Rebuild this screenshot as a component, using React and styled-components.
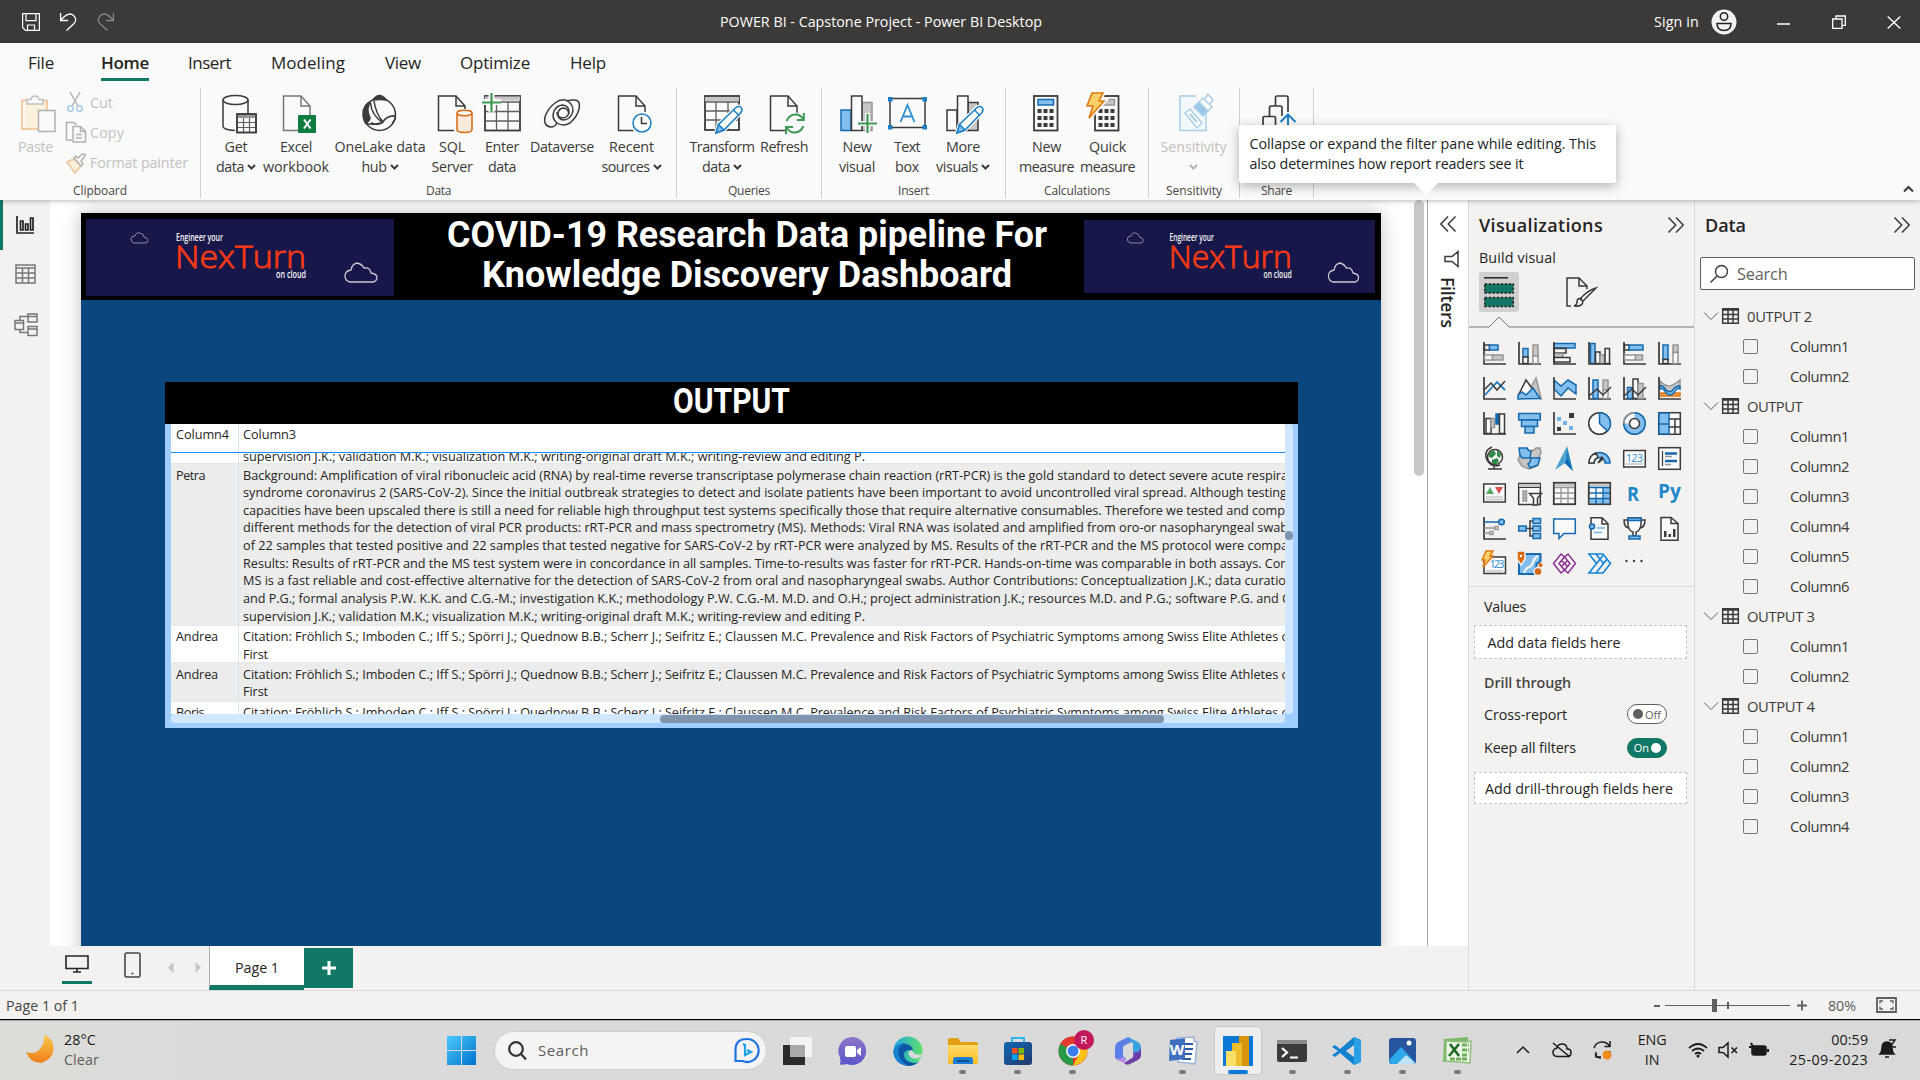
import React, { useLayoutEffect, useRef, useState } from 'react';
import styled, { createGlobalStyle, css } from 'styled-components';

const UI = "'Open Sans', 'Noto Sans', sans-serif";
const INK = '#3b3a39';
const BLUE = '#83beec';
const EDGE = '#1469ae';
const GREY = '#c8c6c4';
const MID = '#979593';
const PAPER = '#fafafa';
const GREEN = '#117865';

const Global = createGlobalStyle`
  * { box-sizing: border-box; }
  html, body { margin: 0; padding: 0; overflow: hidden; }
  body { font-family: ${UI}; color: #252423; }
  svg { display: block; overflow: visible; flex: none; }
`;

/* ---------- fitted text ---------- */
const Run = styled.span`
  display: inline-block;
  white-space: pre;
  flex: none;
`;
const Stretch = styled.span`
  display: inline-block;
  white-space: pre;
  transform-origin: 0 50%;
`;
const StretchBox = styled.span`
  display: inline-block;
  white-space: nowrap;
  width: ${(p) => p.$w}px;
`;

function Fit({ w, children }) {
  const ref = useRef(null);
  const [gap, setGap] = useState(0);
  useLayoutEffect(() => {
    const natural = ref.current.getBoundingClientRect().width;
    setGap((w - natural) / String(children).length);
  }, []);
  return <Run ref={ref} style={{ letterSpacing: gap + 'px' }}>{children}</Run>;
}

function FitScale({ w, children }) {
  const ref = useRef(null);
  const [k, setK] = useState(1);
  useLayoutEffect(() => {
    setK(w / ref.current.getBoundingClientRect().width);
  }, []);
  return (
    <StretchBox $w={w}>
      <Stretch ref={ref} style={{ transform: `scaleX(${k})` }}>{children}</Stretch>
    </StretchBox>
  );
}

/* ---------- frame ---------- */
const Frame = styled.div`
  width: 1920px;
  height: 1080px;
  display: flex;
  flex-direction: column;
  background: #f3f2f1;
  overflow: hidden;
`;
const TitleBar = styled.header`
  height: 43px;
  flex: none;
  background: #3b3a38;
  color: #fff;
  display: grid;
  grid-template-columns: 720px 325px 1fr;
  align-items: center;
  font-size: 14.3px;
`;
const QuickTools = styled.div`
  display: flex;
  align-items: center;
  gap: 20px;
  padding-left: 22px;
`;
const WindowTools = styled.div`
  display: flex;
  align-items: center;
  padding-left: 609px;
`;
const Tool = styled.span`
  display: flex;
  margin-left: ${(p) => p.$gap}px;
`;

const RibbonArea = styled.section`
  height: 157px;
  flex: none;
  background: #fafafa;
  position: relative;
  z-index: 2;
  box-shadow: 0 1px 5px rgba(0, 0, 0, 0.28);
`;
const Tabs = styled.nav`
  display: flex;
  height: 45px;
  padding-left: 28px;
`;
const Tab = styled.div`
  width: ${(p) => p.$w}px;
  margin-right: ${(p) => p.$gap}px;
  height: 38px;
  line-height: 40px;
  font-size: 17px;
  color: #252423;
  ${(p) => p.$active && css`
    font-weight: 600;
    border-bottom: 3px solid ${GREEN};
  `}
`;
const Groups = styled.div`
  display: flex;
  height: 112px;
`;
const Group = styled.div`
  width: ${(p) => p.$w}px;
  height: 110px;
  border-right: 1px solid #d2d0ce;
  display: flex;
  flex-direction: column;
`;
const GroupBody = styled.div`
  display: flex;
  flex: none;
  height: 93px;
  padding: 6px 0 0 ${(p) => p.$pad || 0}px;
`;
const GroupLabel = styled.div`
  display: flex;
  justify-content: center;
  flex: none;
  font-size: 12px;
  line-height: 20px;
  color: #484644;
`;
const RibbonButton = styled.div`
  width: ${(p) => p.$w}px;
  display: flex;
  flex-direction: column;
  align-items: center;
  color: ${(p) => (p.$off ? '#c3c1bf' : '#3b3a39')};
  font-size: 14.3px;
  line-height: 20px;
`;
const ButtonLine = styled.div`
  display: flex;
  align-items: center;
  justify-content: center;
  gap: 3px;
  height: 20px;
  white-space: nowrap;
  &:first-of-type { margin-top: 3px; }
`;
const SmallButtons = styled.div`
  display: flex;
  flex-direction: column;
  padding-left: 7px;
`;
const SmallButton = styled.div`
  display: flex;
  align-items: center;
  gap: 4px;
  height: 30.3px;
  margin-top: ${(p) => (p.$first ? -7 : 0)}px;
  font-size: 14.3px;
  color: #c3c1bf;
`;
const CollapseMark = styled.div`
  position: absolute;
  right: 6px;
  bottom: 7px;
`;
const Tip = styled.div`
  position: absolute;
  left: 1239px;
  top: 82px;
  width: 377px;
  height: 58px;
  padding: 9px 0 0 10.5px;
  background: #fff;
  border-radius: 2px;
  box-shadow: 0 3px 12px rgba(0, 0, 0, 0.3);
  color: #201f1e;
  font-size: 14.3px;
  line-height: 20px;
  display: flex;
  flex-direction: column;
  align-items: flex-start;
  &::after {
    content: '';
    position: absolute;
    left: 175px;
    top: 58px;
    border: 12.5px solid transparent;
    border-top-color: #fff;
    border-bottom-width: 0;
  }
`;

const Main = styled.main`
  height: 790px;
  flex: none;
  display: flex;
`;
const Left = styled.div`
  width: 1468px;
  display: flex;
  flex-direction: column;
`;
const Work = styled.div`
  height: 746px;
  display: flex;
`;
const Rail = styled.aside`
  width: 50px;
  display: flex;
  flex-direction: column;
  background: #f3f2f1;
`;
const RailItem = styled.div`
  height: ${(p) => p.$h}px;
  display: flex;
  align-items: center;
  padding-left: ${(p) => p.$pad}px;
  border-left: 3px solid ${(p) => (p.$active ? GREEN : 'transparent')};
`;
const Canvas = styled.div`
  width: 1377px;
  overflow: hidden;
  background: #fff;
  display: flex;
  justify-content: space-between;
  padding-left: 31px;
`;
const CanvasThumb = styled.div`
  width: 10px;
  height: 276px;
  margin-right: 3px;
  border-radius: 5px;
  background: #c8c8c8;
`;
const Page = styled.div`
  width: 1300px;
  height: 760px;
  margin-top: 13px;
  background: #0a477f;
  box-shadow: 0 0 18px rgba(0, 0, 0, 0.25);
`;
const Banner = styled.div`
  height: 87px;
  background: #000;
  display: flex;
  align-items: flex-start;
`;
const Logo = styled.div`
  width: ${(p) => p.$w}px;
  height: ${(p) => p.$h}px;
  margin: ${(p) => p.$top}px 0 0 ${(p) => p.$left}px;
  background: #171849;
  overflow: hidden;
`;
const BannerTitle = styled.h1`
  width: 690px;
  margin: 2px 0 0;
  color: #fff;
  font: 700 36px/40px Roboto, sans-serif;
  display: flex;
  flex-direction: column;
  align-items: center;
  padding-left: 15px;
`;
const Visual = styled.div`
  width: 1133px;
  height: 346px;
  margin: 82px 0 0 84px;
  background: #a0cfff;
`;
const VisualTitle = styled.div`
  height: 42px;
  background: #000;
  color: #fff;
  font: 700 34.5px/39px Roboto, sans-serif;
  display: flex;
  padding-left: 507.5px;
`;
const VisualRow = styled.div`
  display: flex;
  padding-left: 6px;
`;
const Grid = styled.div`
  width: 1114px;
  height: 290px;
  background: #fff;
  display: flex;
  flex-direction: column;
  overflow: hidden;
  font-size: 12.7px;
  color: #252423;
`;
const GridHead = styled.div`
  height: 29px;
  flex: none;
  display: flex;
  border-bottom: 1px solid #1a8fff;
`;
const GridBody = styled.div`
  height: 261px;
  flex: none;
  overflow: hidden;
  display: flex;
  flex-direction: column;
`;
const GridRow = styled.div`
  display: flex;
  flex: none;
  height: ${(p) => p.$h}px;
  background: ${(p) => (p.$alt ? '#ececec' : '#fff')};
  border-bottom: 1px solid #e3e8ee;
`;
const NameCell = styled.div`
  width: 68px;
  flex: none;
  padding: ${(p) => p.$top || 0}px 0 0 5px;
  border-right: 1px solid #d9e6f2;
  line-height: 17.65px;
`;
const TextCell = styled.div`
  flex: none;
  padding: ${(p) => p.$top || 0}px 0 0 4px;
  margin-bottom: ${(p) => (p.$end ? -3 : 0)}px;
  display: flex;
  flex-direction: column;
  align-items: flex-start;
  justify-content: ${(p) => (p.$end ? 'flex-end' : 'flex-start')};
  line-height: 17.65px;
`;
const VTrack = styled.div`
  width: 8px;
  height: 290px;
  padding-top: 107px;
  border-radius: 4px;
  background: #d1e7ff;
`;
const VThumb = styled.div`
  height: 9px;
  border-radius: 4px;
  background: #8095ad;
`;
const HTrack = styled.div`
  width: 1114px;
  height: 9px;
  padding: 1px 0 0 489px;
  border-radius: 4px;
  background: #d1e7ff;
`;
const HThumb = styled.div`
  width: 504px;
  height: 7.5px;
  border-radius: 4px;
  background: #8095ad;
`;
const Filters = styled.aside`
  width: 41px;
  border-left: 1px solid #a8a6a4;
  background: #fff;
  display: flex;
  flex-direction: column;
  align-items: center;
  padding-top: 16px;
`;
const FunnelSlot = styled.div`
  padding: 18px 0 0 6px;
`;
const FilterLabel = styled.div`
  writing-mode: vertical-rl;
  margin-top: 9px;
  font-size: 17.5px;
  font-weight: 600;
  letter-spacing: -0.2px;
  line-height: 22px;
`;
const PageTabs = styled.div`
  height: 44px;
  display: flex;
  align-items: flex-start;
  padding-left: 62px;
`;
const ViewIcon = styled.div`
  width: 30px;
  height: 38px;
  padding-top: ${(p) => p.$top}px;
  display: flex;
  justify-content: center;
  border-bottom: 3px solid ${(p) => (p.$active ? GREEN : 'transparent')};
`;
const PhoneIcon = styled.div`
  margin-left: 32px;
  padding-top: 6px;
`;
const Steppers = styled.div`
  display: flex;
  gap: 21px;
  margin: 16px 8px 0 27px;
`;
const PageTab = styled.div`
  width: 95px;
  height: 44px;
  padding-left: 25px;
  background: #fff;
  border-left: 1px solid #b3b0ad;
  border-bottom: 5px solid ${GREEN};
  line-height: 43px;
  font-size: 14.3px;
`;
const AddPage = styled.div`
  width: 49px;
  height: 40px;
  margin-top: 2px;
  display: flex;
  align-items: center;
  justify-content: center;
  background: ${GREEN};
`;

/* ---------- side panes ---------- */
const Pane = styled.aside`
  width: ${(p) => p.$w}px;
  border-left: 1px solid #dcdad8;
  background: #f3f2f1;
`;
const PaneHead = styled.div`
  height: 50px;
  display: flex;
  align-items: center;
  justify-content: space-between;
  padding: 0 10px;
  font-size: 18px;
  font-weight: 600;
`;
const BuildLabel = styled.div`
  padding-left: 10px;
  line-height: 16px;
  font-size: 14.3px;
  font-weight: 500;
`;
const Modes = styled.div`
  display: flex;
  height: 46px;
  padding: 6px 0 0 10px;
  gap: 42px;
`;
const Mode = styled.div`
  width: 40px;
  height: 40px;
  display: flex;
  align-items: center;
  justify-content: center;
  border-radius: 3px;
  background: ${(p) => (p.$on ? '#d2d0ce' : 'transparent')};
`;
const VizGrid = styled.div`
  display: grid;
  grid-template-columns: repeat(6, 35px);
  grid-auto-rows: 35px;
  height: 260px;
  padding: 15px 0 0 14px;
  border-bottom: 1px solid #dcdad8;
`;
const FieldLabel = styled.div`
  display: flex;
  align-items: center;
  justify-content: space-between;
  height: ${(p) => p.$h}px;
  padding: 0 27px 0 15px;
  font-size: 14.3px;
  font-weight: ${(p) => (p.$strong ? 600 : 400)};
  color: ${(p) => (p.$strong ? '#484644' : '#252423')};
`;
const DropWell = styled.div`
  width: 213px;
  height: ${(p) => p.$h}px;
  margin-left: 5px;
  padding-left: ${(p) => p.$pad}px;
  display: flex;
  align-items: center;
  border: 1px dashed #c8c6c4;
  background: #fff;
  font-size: 14.3px;
`;
const Toggle = styled.div`
  width: 40px;
  height: 20px;
  display: flex;
  align-items: center;
  gap: 2px;
  padding: 0 5px;
  border-radius: 10px;
  border: 1px solid ${(p) => (p.$on ? GREEN : '#605e5c')};
  background: ${(p) => (p.$on ? GREEN : '#fff')};
  color: ${(p) => (p.$on ? '#fff' : '#605e5c')};
  flex-direction: ${(p) => (p.$on ? 'row-reverse' : 'row')};
  font-size: 11px;
  &::before {
    content: '';
    width: 10px;
    height: 10px;
    border-radius: 50%;
    background: ${(p) => (p.$on ? '#fff' : '#605e5c')};
  }
`;
const SearchBox = styled.div`
  width: 215px;
  height: 33px;
  margin: 7px 0 11px 5px;
  padding-left: 9px;
  display: flex;
  align-items: center;
  gap: 9px;
  border: 1px solid #605e5c;
  border-radius: 2px;
  background: #fff;
  color: #605e5c;
  font-size: 16.3px;
`;
const TableRow = styled.div`
  height: 30px;
  display: flex;
  align-items: center;
  gap: 4px;
  padding-left: 9px;
  font-size: 14.8px;
  color: #3b3a39;
`;
const TableName = styled.span`
  padding-left: 4px;
`;
const FieldRow = styled.div`
  height: 30px;
  display: flex;
  align-items: center;
  gap: 32px;
  padding-left: 48px;
  font-size: 14.8px;
  color: #3b3a39;
`;
const Check = styled.span`
  width: 15px;
  height: 15px;
  border: 1px solid #797775;
  border-radius: 2px;
`;

/* ---------- status + taskbar ---------- */
const Status = styled.footer`
  height: 30px;
  flex: none;
  display: flex;
  align-items: center;
  padding-left: 6px;
  border-top: 1px solid #dcdad8;
  border-bottom: 1px solid #000;
  font-size: 14.3px;
  color: #484644;
`;
const Zoom = styled.div`
  margin-left: 1575px;
  display: flex;
  align-items: center;
  color: #605e5c;
`;
const Percent = styled.span`
  margin: 0 20px 0 21px;
`;
const Taskbar = styled.footer`
  height: 60px;
  flex: none;
  display: flex;
  align-items: center;
  background: linear-gradient(90deg, #dcdcd8, #dadada 12%, #d9d9d9);
  border-top: 1px solid #a9a9a9;
`;
const Weather = styled.div`
  width: 447px;
  padding: 0 0 2px 26px;
  display: flex;
  align-items: center;
  gap: 9px;
  font-size: 14.3px;
`;
const Stack = styled.div`
  display: flex;
  flex-direction: column;
  align-items: ${(p) => p.$align || 'flex-start'};
  line-height: 20px;
  color: #1b1b1b;
`;
const Faint = styled.span`
  color: #5d5d5d;
`;
const SearchPill = styled.div`
  width: 273px;
  height: 39px;
  margin: 0 0 1px 18px;
  padding: 0 7px 0 13px;
  display: flex;
  align-items: center;
  gap: 12px;
  border-radius: 20px;
  border: 1px solid #cfcfcf;
  background: #f4f4f4;
  color: #5d5d5d;
  font-size: 15px;
`;
const BingSlot = styled.span`
  margin-left: auto;
`;
const Apps = styled.div`
  display: flex;
  padding: 0 0 1px 7px;
`;
const AppSlot = styled.div`
  width: 48px;
  height: 49px;
  margin-right: 6.95px;
  padding-top: 9px;
  display: flex;
  flex-direction: column;
  align-items: center;
  border-radius: 5px;
  background: ${(p) => (p.$active ? '#eeeeee' : 'transparent')};
  border: 1px solid ${(p) => (p.$active ? '#c9c9c9' : 'transparent')};
  &::after {
    content: '';
    display: ${(p) => (p.$open ? 'block' : 'none')};
    width: ${(p) => (p.$active ? 20 : 7)}px;
    height: 4px;
    margin-top: 4px;
    border-radius: 2px;
    background: ${(p) => (p.$active ? '#0a78d4' : '#7b7b7b')};
  }
`;
const Tray = styled.div`
  display: flex;
  align-items: center;
  margin-left: 23px;
  padding-bottom: 2px;
  font-size: 14.3px;
`;
const TrayItem = styled.div`
  width: ${(p) => p.$w}px;
  display: flex;
  justify-content: ${(p) => p.$justify || 'center'};
`;

/* ---------- icon helpers ---------- */
const Svg = ({ s = 40, w = s, h = s, children, ...rest }) => (
  <svg width={w} height={h} viewBox={`0 0 ${w} ${h}`} fill="none" stroke={INK} strokeWidth="1.5" {...rest}>{children}</svg>
);
const B = ({ x, y, w, h, f = PAPER, s = INK }) => <rect x={x} y={y} width={w} height={h} fill={f} stroke={s} />;
const Axis = () => <path d="M1 0V22H23" strokeWidth="1.7" />;
const Doc = ({ x = 6.5, stroke = INK }) => (
  <path d={`M${x} 2h17.5l9 10v24.5h-26.500z M${x + 17.5} 2v10h9`} fill={PAPER} stroke={stroke} />
);
const Caret = ({ color = INK }) => (
  <Svg w={9} h={6} stroke={color} strokeWidth="2"><path d="M1 1l3.500 3.500L8 1" /></Svg>
);
const Pencil = () => (
  <g>
    <path d="M14 39l2.500-8.500L34 13.500q3-2 5 0t0 5L22 36z" fill={PAPER} stroke={PAPER} strokeWidth="4" />
    <path d="M14 39l2.500-8.500L34 13.500q3-2 5 0t0 5L22 36z" fill="#fff" stroke="#1a7fc4" />
    <path d="M14 39l2.500-8.500 5.500 5.500z" fill={BLUE} stroke="#1a7fc4" />
    <path d="M31.500 16l5 5" stroke="#1a7fc4" />
  </g>
);
const Calculator = ({ panel = BLUE, edge = EDGE }) => (
  <g>
    <rect x="7" y="2" width="23.500" height="34.500" fill={PAPER} strokeWidth="1.800" />
    <rect x="11" y="5.500" width="15.500" height="5.500" fill={panel} stroke={edge} />
    {[15, 22, 29].map((y) => [10.5, 16.5, 22.5].map((x) => (
      <rect key={x + '-' + y} x={x} y={y} width="4" height="4" fill={INK} stroke="none" />
    )))}
  </g>
);

const icons = {
  paste: (
    <Svg stroke="#c3c1bf">
      <path d="M9 7h22v10h-8v18H9z" fill="#fbf1da" stroke="none" />
      <path d="M12 6.500H6V35h16M26 6.500h5V16" stroke="#f2c9a0" strokeWidth="2" />
      <path d="M11 10V5.500h4q.500-3.500 4-3.500t4 3.500h4V10z" fill={PAPER} />
      <path d="M22.500 16.500H39v21H22.500z" fill={PAPER} stroke="#b3b1af" />
    </Svg>
  ),
  getData: (
    <Svg>
      <path d="M7 6v26q0 4 12 4.500M32 6v13" /><ellipse cx="19.500" cy="6" rx="12.500" ry="4.500" fill={PAPER} />
      <rect x="21" y="20" width="19" height="18.500" fill={PAPER} /><path d="M21 22.500h19" strokeWidth="3" stroke={MID} />
      <path d="M21 28.500h19M21 33.500h19M27.500 24v14M33.500 24v14" stroke="#605e5c" strokeWidth="1.200" /><rect x="21" y="20" width="19" height="18.500" />
    </Svg>
  ),
  excel: (
    <Svg>
      <Doc x={7.5} stroke="#797775" /><rect x="22" y="21" width="18" height="18" rx="1" fill="#107c41" stroke="none" />
      <path d="M28 25.500l6.500 9M34.500 25.500l-6.500 9" stroke="#fff" strokeWidth="2" />
    </Svg>
  ),
  onelake: (
    <Svg>
      <circle cx="19.500" cy="20.500" r="16" />
      <path d="M12 6.500Q2 9 2.300 21q.500 6 3 9 5-2 5.500-6Q6 14 12 6.500z" fill={INK} stroke="none" />
      <path d="M13 6q6-9 13.500 0-6-1-13.500 0z" fill={INK} />
      <path d="M10.500 9q1 12 12 19.500M14 7q2 13 9 21 4-7 13-6M5.500 29.500q8 2 17-1M23 28.500q-6 4-12 0M35 22q1 4-3 7" />
    </Svg>
  ),
  sql: (
    <Svg>
      <Doc x={6.5} /><path d="M22 15h19v26H22z" fill={PAPER} stroke="none" />
      <path d="M25 19.500v16q0 3 7.500 3t7.500-3v-16" fill="#fbeadb" stroke="#d8680f" /><ellipse cx="32.500" cy="19" rx="7.500" ry="2.700" fill="#fff" stroke="#d8680f" />
    </Svg>
  ),
  enter: (
    <Svg>
      <rect x="3" y="2" width="35" height="34.500" fill={PAPER} strokeWidth="1.800" /><path d="M3 4.500h35" stroke={GREY} strokeWidth="4" />
      <path d="M3 8h35M3 17.500h35M3 27h35M14.500 8v28M26 8v28" stroke="#605e5c" strokeWidth="1.300" />
      <path d="M9.500-2v20M-1 8h20" stroke={PAPER} strokeWidth="6" /><path d="M9.500-1v19M0 8.500h19" stroke="#3f9a55" strokeWidth="2.200" />
    </Svg>
  ),
  dataverse: (
    <Svg>
      <path d="M31 6q8-1 6 9-2 8-9 14-7 4-13 0-6-5-3-12 3-6 9-6 6 1 6 7-1 6-7 6-5-1-5-6" />
      <path d="M9 33q-8-1-6-10 3-9 10-14 8-6 14-1 6 5 3 12-3 6-9 6-5-1-5-6 0-5 5-6 5 0 6 6" /><path d="M9 33q4 0 6-4M31 6q-3 0-6 1" />
    </Svg>
  ),
  recent: (
    <Svg>
      <Doc x={6.5} /><circle cx="30" cy="29" r="9.500" fill="#fff" stroke="#fafafa" strokeWidth="4" />
      <circle cx="30" cy="29" r="9" fill="#fff" stroke="#1a7fc4" /><path d="M29.500 23v6.500h5.500" />
    </Svg>
  ),
  transform: (
    <Svg>
      <rect x="3" y="2" width="34" height="34" fill={PAPER} strokeWidth="1.800" /><path d="M3 5h34" stroke={GREY} strokeWidth="4" />
      <path d="M3 8h34M3 17h34M3 26h34M14 8v28M26 8v28" stroke="#605e5c" strokeWidth="1.300" /><Pencil />
    </Svg>
  ),
  refresh: (
    <Svg>
      <Doc x={6.5} /><circle cx="31" cy="29.500" r="11" fill={PAPER} stroke="none" />
      <g stroke="#3f9a55" strokeWidth="2"><path d="M22.500 27q3-6.500 9-6.500 5 0 8 5M39.500 32q-3 6.500-9 6.500-5 0-8-5" /><path d="M39.800 19v7h-7M22 40v-7h7" /></g>
    </Svg>
  ),
  newVisual: (
    <Svg>
      <B x={4} y={16} w={10} h={20.5} f={BLUE} s={EDGE} /><B x={25} y={8.5} w={10} h={28} f={GREY} s={MID} /><B x={14.5} y={2} w={10.5} h={34.500} />
      <path d="M30.500 19v20M20.500 29.500h20" stroke={PAPER} strokeWidth="5" /><path d="M30.500 20v19M21 29.500h19" stroke="#3f9a55" strokeWidth="2.200" />
    </Svg>
  ),
  textBox: (
    <Svg>
      <rect x="3" y="4.500" width="35" height="29" fill={PAPER} />
      {[[1, 3], [35.5, 3], [1, 31], [35.5, 31]].map(([x, y]) => <rect key={x + '-' + y} x={x} y={y} width="4.500" height="4.500" fill="#1a7fc4" stroke="none" />)}
      <path d="M13.500 28L20.500 11 27.500 28M16 22.500h9" stroke="#2b8fd6" strokeWidth="1.800" />
    </Svg>
  ),
  more: (
    <Svg>
      <B x={4} y={16} w={10} h={20.5} /><B x={25} y={8.5} w={10} h={28} f={GREY} /><B x={14.5} y={2} w={10.5} h={34.500} /><Pencil />
    </Svg>
  ),
  calc: <Svg><Calculator /></Svg>,
  quick: (
    <Svg>
      <Calculator panel={GREY} edge={MID} />
      <path d="M4-1h11l-4 8h5L1 24l4-12H-1z" fill="#ffd36b" stroke={PAPER} strokeWidth="5" /><path d="M4-1h11l-4 8h5L1 24l4-12H-1z" fill="#ffd06a" stroke="#e07a12" strokeWidth="1.600" />
    </Svg>
  ),
  sensitivity: (
    <Svg stroke="#a9cfe8">
      <path d="M22 2H6v34.500h26V20" fill="#f2f8fc" /><path d="M20 13l5-5 9 9-5 5z" fill="#9cc9e8" /><path d="M25 8l4-4 9 9-4 4z" fill={PAPER} /><path d="M31 5l3-5 5 6-3 4" />
      <path d="M11 19l5-4 12 14-5 5z" fill={PAPER} /><path d="M16 20l7 8" strokeWidth="2" />
    </Svg>
  ),
  share: (
    <Svg strokeWidth="1.700">
      <path d="M18.500 12V3.500q0-1.500 1.500-1.500h9.500q1.500 0 1.500 1.500V18M12.500 22v-8.500q0-1.500 1.500-1.500h9.500q1.500 0 1.500 1.500V22M6 34V24q0-1.500 1.500-1.500H17q1.500 0 1.500 1.500v10" />
      <path d="M31 34V21M23.500 28l7.500-7.500L38.500 28" stroke="#1a7fc4" strokeWidth="2" />
    </Svg>
  ),
};

const cut = (
  <Svg w={20} h={22} stroke="#b3b1af"><path d="M4 1l8 14M14 1L6 15" /><circle cx="4.500" cy="17.500" r="2.800" stroke="#a5cbe6" /><circle cx="13.500" cy="17.500" r="2.800" stroke="#a5cbe6" /></Svg>
);
const copy = (
  <Svg w={20} h={20} stroke="#b3b1af"><path d="M6 18H.500V.500H8l2.500 2.500" /><path d="M7 4.500h7.500l5 5v10.500H7z" fill={PAPER} /><path d="M14.500 4.500v5h5M10 12.500h6M10 16h6" /></Svg>
);
const painter = (
  <Svg w={20} h={20} stroke="#b3b1af"><path d="M1 9l7-3 7 7-6 7z" fill="#fbeedd" stroke="#efc49a" /><path d="M8 5l7 8 2-2-2-3 4-5q1-2-1-2t-3 1l-3 3-2-2z" fill={PAPER} /></Svg>
);

const V = ({ children }) => <Svg s={23}>{children}</Svg>;
const vizIcons = [
  <V><Axis /><B x={1.500} y={3} w={5} h={5} /><B x={6.500} y={3} w={8.500} h={5} f={BLUE} s={EDGE} /><B x={1.500} y={13} w={8} h={5} s={MID} /><B x={9.500} y={13} w={10.500} h={5} f={GREY} s={MID} /></V>,
  <V><Axis /><B x={5} y={6.500} w={5} h={8.500} f={BLUE} s={EDGE} /><B x={5} y={15} w={5} h={6.500} /><B x={15} y={3} w={5} h={12} f={GREY} s={MID} /><B x={15} y={14} w={5} h={7.500} s={MID} /></V>,
  <V><B x={1} y={1.500} w={21} h={4.500} f={BLUE} s={EDGE} /><B x={1} y={6.500} w={12} h={4.500} /><B x={1} y={11.500} w={9} h={4} f={GREY} s={MID} /><B x={1} y={15.500} w={16} h={4.500} /><Axis /></V>,
  <V><B x={2.500} y={1.500} w={4.500} h={20} f={BLUE} s={EDGE} /><B x={7.500} y={10} w={4.500} h={11.500} /><B x={12} y={13} w={4.500} h={8.500} f={GREY} s={MID} /><B x={17} y={6.500} w={4.500} h={15} /><Axis /></V>,
  <V><Axis /><B x={1.500} y={3} w={4.500} h={5} /><B x={6} y={3} w={14} h={5} f={BLUE} s={EDGE} /><B x={1.500} y={13} w={11} h={5} s={MID} /><B x={12.500} y={13} w={7} h={5} f={GREY} s={MID} /></V>,
  <V><Axis /><B x={5} y={3} w={5} h={14.500} f={BLUE} s={EDGE} /><B x={5} y={17.500} w={5} h={4} /><B x={15} y={3} w={5} h={7.500} f={GREY} s={MID} /><B x={15} y={10.500} w={5} h={11} s={MID} /></V>,
  <V><Axis /><path d="M2 18l12-13 8 8" stroke="#1a7fc4" strokeWidth="1.800" /><path d="M1 13l7-7 6 7 8-9" /></V>,
  <V><path d="M12 12l6-11 5 20V22z" fill={GREY} stroke={MID} /><path d="M0 19L8 3l8 11" fill={PAPER} /><path d="M0 22v-4l4-3 4 3 7-7 7 10.500z" fill={BLUE} stroke={EDGE} /></V>,
  <V><path d="M1 3l7 6 7-6 8 5v9l-8-6-7 8-7-7z" fill={BLUE} stroke={EDGE} /><path d="M1 0v22h22" /></V>,
  <V><Axis /><B x={5} y={3} w={5} h={18.500} f={BLUE} s={EDGE} /><B x={15} y={3} w={5} h={10} f={GREY} s={MID} /><B x={15} y={13} w={5} h={8.500} s={MID} /><path d="M1 19l8-7 6 6 8-8" /></V>,
  <V><Axis /><B x={4.500} y={10.500} w={5} h={11} f={BLUE} s={EDGE} /><B x={10} y={2} w={5} h={19.500} /><B x={15} y={6.500} w={5} h={15} f={GREY} s={MID} /><path d="M1 19l8-7 6 6 8-8" /></V>,
  <V><path d="M2 4q5 5 9 5t11-6v5q-6 6-11 6T2 8z" fill={GREY} stroke={MID} /><path d="M3 16h19v3H3z" fill="#f5a04c" stroke="#e07a12" /><path d="M2 12q3-2 6 4 4 4 8 0 3-6 6-4v-3q-5 0-8 5-3 2-6-1-3-5-6-4z" fill={BLUE} stroke={EDGE} /><Axis /></V>,
  <V><Axis /><B x={3} y={6.500} w={5} h={15} /><B x={8} y={6.500} w={3.500} h={9} f={GREY} s={MID} /><B x={13} y={2} w={2.500} h={10} f={EDGE} s={EDGE} /><B x={16.500} y={2} w={5} h={19.500} /></V>,
  <V><B x={.7} y={1.500} w={21.600} h={6.500} f={BLUE} s={EDGE} /><B x={3.500} y={8} w={16} h={6.500} f={BLUE} s={EDGE} /><B x={7} y={14.500} w={9} h={6.500} f={BLUE} s={EDGE} /></V>,
  <V><Axis /><g stroke="none"><path d="M4 5h4v4H4zM10 9h4v4h-4zM16 14h4v4h-4z" fill="#6fb2e8" /><path d="M16 1h5v5h-5zM4 15h4v4H4z" fill={INK} /></g></V>,
  <V><circle cx="11.500" cy="11.500" r="10.800" fill={PAPER} /><path d="M11.500.700a10.800 10.800 0 018 18.200l-8-7.400z" fill={BLUE} stroke={EDGE} /></V>,
  <V><circle cx="11.500" cy="11.500" r="8" stroke={BLUE} strokeWidth="6" /><path d="M3.500 11.500a8 8 0 018-8" stroke={PAPER} strokeWidth="6" /><circle cx="11.500" cy="11.500" r="10.800" stroke={EDGE} /><circle cx="11.500" cy="11.500" r="5" fill={PAPER} stroke={INK} /><path d="M.700 11.500a10.800 10.800 0 0110.800-10.800" stroke={MID} /></V>,
  <V><rect x=".7" y=".7" width="21.600" height="21.600" fill={PAPER} /><path d="M1 1h10v21H1zM1 12h10" fill={BLUE} stroke={EDGE} /><path d="M11 7h11M17 7v15M11 15h11" /></V>,
  <V><circle cx="12" cy="10" r="7.500" fill={PAPER} /><g fill="#2e8b45" stroke="none"><path d="M6 6l5-3 2 4-4 4-3-1zM14 3l4 4-1 4-3-2zM9 13l5-2 2 3-4 4-3-2z" /></g><path d="M9 0Q0 4 4 13q5 8 13 5M11 18v4M5 22h14" /></V>,
  <V><path d="M11 4q5 0 7-3h4l1 5-3 5-1 8-8 3-7-3-4-6 3-8z" fill={GREY} stroke={MID} /><path d="M1 1h8q1 3 4 3l-1 7H4L2 8zM13 11h9l-2 7-8 3-2-4 2-2z" fill={BLUE} stroke={EDGE} /></V>,
  <V><g stroke="none"><path d="M14-1L2 23l10-7z" fill="#4ba3cf" /><path d="M14-1l6 25-8-8z" fill="#1b86c0" /><path d="M14 12l6 12-8-8z" fill="#0a5fb0" /></g></V>,
  <V><path d="M1 16a10.500 10.500 0 0121 0h-5a5.500 5.500 0 00-11 0z" fill={BLUE} stroke={EDGE} /><path d="M1 16A10.500 10.500 0 018 6l2 4.500a6 6 0 00-4 5.500z" fill={PAPER} /><path d="M10 16l4-6 1 2z" fill={INK} /></V>,
  <V><rect x=".7" y="3.500" width="21.600" height="16.500" fill={PAPER} /><path d="M3 17h17" stroke={GREY} /><text x="11.500" y="15" textAnchor="middle" fontSize="10.500" fontFamily={UI} fill="#2b8fd6" stroke="none" textLength="17">123</text></V>,
  <V><rect x=".7" y=".7" width="21.600" height="21.600" fill={PAPER} /><path d="M4.500 4v15" strokeWidth="1.200" /><path d="M7 6.500h12M7 14h12" stroke="#1469ae" strokeWidth="2.400" /><path d="M7 9.500h7M7 17.500h6" stroke={MID} /></V>,
  <V><rect x=".7" y="2" width="21.600" height="18" fill={PAPER} /><path d="M3 12L7 5l4 7z" fill="#57a860" stroke="none" /><path d="M12 5h8l-4 7z" fill="#dc5151" stroke="none" /><path d="M3 15h17M3 17.500h17" stroke={GREY} /></V>,
  <V><rect x=".7" y="1.500" width="21.600" height="21" fill={PAPER} /><path d="M1 3.500h21" stroke={GREY} strokeWidth="3" /><path d="M1 5.500h21" strokeWidth="1" /><path d="M5 9h3.500v4H5zM5 15h3.500v4H5z" fill={GREY} stroke={MID} /><path d="M11.500 11.500h12l-4 4.500v7h-4v-7z" fill={PAPER} /></V>,
  <V><rect x=".7" y=".7" width="21.600" height="21.600" fill={PAPER} /><path d="M1 3h21" stroke={GREY} strokeWidth="3" /><path d="M1 5.500h21M1 11h21M1 16.500h21M8 5v17M15 5v17" stroke={MID} strokeWidth="1.300" /><rect x=".7" y=".7" width="21.600" height="21.600" /></V>,
  <V><rect x=".7" y=".7" width="21.600" height="21.600" fill={PAPER} /><path d="M15 5h7v17H1v-5h14z" fill={BLUE} stroke="none" /><path d="M1 3h21" stroke={GREY} strokeWidth="3" /><path d="M1 5.500h21M1 11h21M1 16.500h21M8 5v17M15 5v17" stroke={EDGE} strokeWidth="1.300" /><rect x=".7" y=".7" width="21.600" height="21.600" /></V>,
  <V><text x="4" y="18.500" fontSize="20" fontWeight="700" fontFamily={UI} fill="#1f87c9" stroke="none" textLength="12" lengthAdjust="spacingAndGlyphs">R</text></V>,
  <V><text x="0" y="16" fontSize="19" fontWeight="700" fontFamily={UI} fill="#1f87c9" stroke="none" textLength="23" lengthAdjust="spacingAndGlyphs">Py</text></V>,
  <V><Axis /><path d="M1 5h15" stroke={EDGE} /><circle cx="18.500" cy="5" r="2.800" fill={BLUE} stroke={EDGE} /><path d="M1 11h11M1 16h6" stroke={MID} /><rect x="12" y="9.500" width="3" height="3" stroke={MID} /><rect x="7" y="14.500" width="3" height="3" stroke={MID} /></V>,
  <V><path d="M8 11.500h5M18 4h-6v15h6M12 11.500h3" /><B x={.7} y={9} w={7.500} h={5} f={BLUE} s={EDGE} /><B x={15} y={1.500} w={7.500} h={5} f={BLUE} s={EDGE} /><B x={15} y={9} w={7.500} h={5} f={BLUE} s={EDGE} /><B x={15} y={16.500} w={7.500} h={5} f={BLUE} s={EDGE} /></V>,
  <V><path d="M.700 2h21.600v14.500H11l-5 5v-5H.700z" fill={PAPER} stroke={EDGE} /></V>,
  <V><path d="M3 7V.700h11l6 6v15.600H3V12" fill={PAPER} /><path d="M14 1v6h6" /><circle cx="4" cy="9.500" r="2.500" fill={BLUE} stroke={EDGE} /><path d="M9 11h8M6 15.500h8" stroke="#6fb2e8" /></V>,
  <V><path d="M5 3H1q0 8 5.500 8M18 3h4q0 8-5.500 8" /><path d="M5 1h13v7q-1 6-5 7v4h-3v-4q-4-1-5-7z" fill={PAPER} /><path d="M5 1h13v2.500H5zM6 19h11v3H6z" fill={BLUE} stroke={EDGE} /></V>,
  <V><path d="M3 .500h10l7 6v16.800H3z" fill={PAPER} /><path d="M13 .500v6h7" /><path d="M6 14h2.500v6H6zM10.500 17H13v3h-2.500zM15 12h2.500v8H15z" fill={INK} stroke="none" /></V>,
  <V><rect x="1" y="5" width="21.500" height="16.500" fill={PAPER} /><path d="M3 19h17" stroke={GREY} /><text x="14" y="16" textAnchor="middle" fontSize="11" fontFamily={UI} fill="#2b8fd6" stroke="none" textLength="15">123</text><path d="M3-1h7L7 4h3L0 15l2-7h-3z" fill="#ffd06a" stroke="#e07a12" /></V>,
  <V><path d="M1 2h21.500v7l-4 3-1 10H1z" fill={BLUE} stroke={EDGE} strokeWidth="2" /><path d="M20 4q-4 2-5 6t-4 5-5 6" stroke={PAPER} strokeWidth="2" /><path d="M-1-1h8v8l-4 6-4-6z" fill="#d8680f" stroke="#f3f2f1" /><circle cx="3" cy="4" r="1.300" fill="#fff" stroke="none" /><circle cx="20" cy="19.500" r="4" fill="#d8680f" stroke="#f3f2f1" /><circle cx="22.500" cy="13" r="2" fill="#d8680f" stroke="none" /></V>,
  <V><g stroke="#8a2f91" strokeWidth="1.500"><path d="M.500 11.500L8 2l3.500 3L15 2l7.500 9.500L15 21l-3.500-3L8 21z" /><path d="M11.500 5l-5.500 6.500 5.500 6.500 5.500-6.500zM8.500 8.500l6 6M14.500 8.500l-6 6" /></g></V>,
  <V><g stroke="#1283da" strokeWidth="1.600"><path d="M1 2h14l7.500 9.500L15 21H1l7.500-9.500z" /><path d="M8 2l7.500 9.500L8 21M4 17.500h0M8.500 11.500L15 3.500M8 21L19 7" /></g></V>,
  <V><g fill={INK} stroke="none"><circle cx="3.500" cy="9" r="1.200" /><circle cx="11" cy="9" r="1.200" /><circle cx="18.500" cy="9" r="1.200" /></g></V>,
];

const Chevrons = ({ left }) => (
  <Svg s={16} strokeWidth="1.500"><path d={left ? 'M8 .500L.800 8 8 15.500M15.500 .500L8.300 8l7.200 7.500' : 'M8 .500L15.200 8 8 15.500M.500 .500L7.700 8l-7.200 7.500'} /></Svg>
);
const TableGlyph = () => (
  <Svg w={17} h={16} strokeWidth="1.500"><path d="M.700 .700h15.600v14.600H.700zM.700 2h15.600M.700 6.500h15.600M.700 11h15.600M6 2v13M11 2v13" /></Svg>
);

/* ---------- brand banner ---------- */
const Brand = ({ k = 1, dx = 0, dy = 0 }) => (
  <svg width="308" height="77" viewBox="0 0 308 77" fill="none">
    <g transform={`translate(${dx} ${dy}) scale(${k} 1)`}>
      <path d="M48 24q-3-1-3-4t4-3q1-4 5-3t4 4q4 1 4 3.500T59 24z" stroke="#8b8ba6" />
      <path d="M264 63q-5-1-5-6t6-6q1-6 6-7 5 1 7 5 6-1 7 5 6 1 6 4.500t-4 4.500z" stroke="#c9c9d6" strokeWidth="1.300" />
      <g fontFamily="'Open Sans', sans-serif">
        <text x="90" y="22" fontSize="10" fontWeight="600" fill="#f5f5f5" textLength="47" lengthAdjust="spacingAndGlyphs">Engineer your</text>
        <text x="89" y="49" fontSize="32" fontWeight="300" fill="#fb3a14" stroke="#fb3a14" strokeWidth=".8" textLength="131" lengthAdjust="spacingAndGlyphs">NexTurn</text>
        <text x="190" y="59" fontSize="10" fontWeight="600" fill="#f5f5f5" textLength="30" lengthAdjust="spacingAndGlyphs">on cloud</text>
      </g>
    </g>
  </svg>
);

/* ---------- data ---------- */
const TABS = [['File', 26, 47], ['Home', 48, 39], ['Insert', 43, 40], ['Modeling', 74, 40], ['View', 36, 39], ['Optimize', 70, 40], ['Help', 36, 0]];
const GROUPS = [
  { w: 476, pad: 7, label: ['Data', 25], items: [
    [56, 'getData', ['Get', 23], ['data', 28, 1]], [64, 'excel', ['Excel', 32], ['workbook', 66]],
    [104, 'onelake', ['OneLake data', 91], ['hub', 25, 1]], [40, 'sql', ['SQL', 26], ['Server', 41]],
    [60, 'enter', ['Enter', 34], ['data', 28]], [60, 'dataverse', ['Dataverse', 64]], [79, 'recent', ['Recent', 45], ['sources', 48, 1]]] },
  { w: 145, pad: 8, label: ['Queries', 42], items: [[74, 'transform', ['Transform', 65], ['data', 28, 1]], [50, 'refresh', ['Refresh', 48]]] },
  { w: 184, pad: 12, label: ['Insert', 31], items: [[46, 'newVisual', ['New', 29], ['visual', 36]], [54, 'textBox', ['Text', 26], ['box', 24]], [58, 'more', ['More', 34], ['visuals', 42, 1]]] },
  { w: 143, pad: 10, label: ['Calculations', 66], items: [[61, 'calc', ['New', 29], ['measure', 55]], [61, 'quick', ['Quick', 37], ['measure', 55]]] },
  { w: 91, pad: 11, label: ['Sensitivity', 56], items: [[67, 'sensitivity', ['Sensitivity', 66], [null, 0, 1]]] },
  { w: 74, pad: 7, label: ['Share', 31], items: [[60, 'share']] },
];
const LINES = [
  ['Background: Amplification of viral ribonucleic acid (RNA) by real-time reverse transcriptase polymerase chain reaction (rRT-PCR) is the gold standard to detect severe acute respira', 1045],
  ['syndrome coronavirus 2 (SARS-CoV-2). Since the initial outbreak strategies to detect and isolate patients have been important to avoid uncontrolled viral spread. Although testing', 1044],
  ['capacities have been upscaled there is still a need for reliable high throughput test systems specifically those that require alternative consumables. Therefore we tested and comp', 1042],
  ['different methods for the detection of viral PCR products: rRT-PCR and mass spectrometry (MS). Methods: Viral RNA was isolated and amplified from oro-or nasopharyngeal swab', 1045],
  ['of 22 samples that tested positive and 22 samples that tested negative for SARS-CoV-2 by rRT-PCR were analyzed by MS. Results of the rRT-PCR and the MS protocol were compa', 1045],
  ['Results: Results of rRT-PCR and the MS test system were in concordance in all samples. Time-to-results was faster for rRT-PCR. Hands-on-time was comparable in both assays. Con', 1045],
  ['MS is a fast reliable and cost-effective alternative for the detection of SARS-CoV-2 from oral and nasopharyngeal swabs. Author Contributions: Conceptualization J.K.; data curatio', 1043],
  ['and P.G.; formal analysis P.W. K.K. and C.G.-M.; investigation K.K.; methodology P.W. C.G.-M. M.D. and O.H.; project administration J.K.; resources M.D. and P.G.; software P.G. and C', 1047],
  ['supervision J.K.; validation M.K.; visualization M.K.; writing-original draft M.K.; writing-review and editing P.', 622],
];
const CITATION = [
  ['Citation: Fröhlich S.; Imboden C.; Iff S.; Spörri J.; Quednow B.B.; Scherr J.; Seifritz E.; Claussen M.C. Prevalence and Risk Factors of Psychiatric Symptoms among Swiss Elite Athletes o', 1046],
  ['First', 25],
];
const ROWS = [
  { h: 11, name: '', lines: [LINES[8]], end: true },
  { h: 162, name: 'Petra', nw: 29, lines: LINES, alt: true, top: 2.5 },
  { h: 37, name: 'Andrea', nw: 42, lines: CITATION, top: 2 },
  { h: 39, name: 'Andrea', nw: 42, lines: CITATION, alt: true, top: 2.6 },
  { h: 37, name: 'Boris', nw: 28, lines: CITATION, top: 1.5 },
];
const TABLES = [['0UTPUT 2', 65, 2], ['OUTPUT', 55, 6], ['OUTPUT 3', 67.5, 2], ['OUTPUT 4', 67.5, 4]];

/* ---------- taskbar drawings ---------- */
const T = ({ children }) => <Svg s={30} stroke="none">{children}</Svg>;
const apps = [
  { icon: <T><path d="M0 9h22v20H0z" fill="#2b2b2b" /><path d="M7 1h22v20H7z" fill="#f4f4f4" /><path d="M7 9h15v12H7z" fill="#a9a9a9" /></T> },
  { icon: <T><path d="M15 1a14 14 0 1 1-6 27q-4 1-7 .500 1-3 0-7A14 14 0 0115 1z" fill="url(#chat)" /><rect x="7" y="10" width="11" height="11" rx="2" fill="#fff" /><path d="M19 14l4-3v9l-4-3z" fill="#fff" /></T> },
  { icon: <T><circle cx="15" cy="15" r="14.500" fill="url(#edge)" /><path d="M.500 15Q3 7 11 7.500q9 1 9 8-6-4-9 2-1 8 10 9.500 4 0 6-2-5 5-12 5Q1 28 .500 15z" fill="#0b57a5" /><path d="M.500 15Q3 7 11 7.500q-8 4-5 12 2 7 9 10Q1 28 .500 15z" fill="#1583d2" /><path d="M15.500 18q0-3 3-4 2 1 2 3 4 3 9 1-1 3-4 4-8 2-10-4z" fill="#dadada" /></T> },
  { open: 1, icon: <T><path d="M0 4q0-2 2-2h8l3 4h15q2 0 2 2v18q0 2-2 2H2q-2 0-2-2z" fill="#e0a012" /><path d="M0 9h30v17q0 2-2 2H2q-2 0-2-2z" fill="url(#folder)" /><path d="M5 28v-4q0-3 3-3h14q3 0 3 3v4z" fill="#1a7fd0" /><path d="M9 25h12" stroke="#0b4f94" strokeWidth="2" /></T> },
  { open: 1, icon: <T><path d="M9 7V2h12v5" stroke="#2fb4ea" strokeWidth="2" fill="none" /><rect x="1" y="6" width="28" height="23" rx="3" fill="url(#store)" /><path d="M9 12h5.500v5.500H9z" fill="#f25022" /><path d="M15.500 12H21v5.500h-5.500z" fill="#7fba00" /><path d="M9 18.500h5.500V24H9z" fill="#00a4ef" /><path d="M15.500 18.500H21V24h-5.500z" fill="#ffb900" /></T> },
  { open: 1, icon: <T><circle cx="15" cy="15" r="14.500" fill="#e33b2e" /><path d="M15 15L2.400 7.800A14.500 14.500 0 0015 29.500z" fill="#279847" /><path d="M15 15l12.600-7A14.500 14.500 0 0115 29.500L21 18z" fill="#fbc116" /><path d="M2.400 7.800A14.500 14.500 0 0127.600 7.800H15z" fill="#e33b2e" /><circle cx="15" cy="15" r="7" fill="#fff" /><circle cx="15" cy="15" r="5.500" fill="#3b7ded" /><circle cx="26" cy="4" r="10" fill="#c2185b" /><text x="26" y="8" textAnchor="middle" fontSize="11" fontFamily={UI} fill="#fff">R</text></T> },
  { icon: <T><path d="M15 1L5 6Q2 8 2 11v9q0 3 3 4l5 2q3-1 3-3l-3-3v-8q0-2 2-3l7-3q0-4-4-5z" fill="#5b7fe8" /><path d="M15 1l10 5q3 2 3 6v7q-4-1-8-3V8z" fill="#3aa0e0" /><path d="M28 12v8q0 2-3 4l-8 4q-3 2-6-1l8-5q2-1 1-6 5 2 8-4z" fill="#6b3fa8" /><path d="M3 22q3 2 7-1l2 1q1 3-1 5l-6-3z" fill="#b58be8" /></T> },
  { open: 1, icon: <T><path d="M9 2l17-1v4l3 1-2 22-17-2z" fill="#fff" stroke="#9db3d8" /><path d="M14 8h11M14 13h11M14 18h10M14 23h9" stroke="#2c58a8" strokeWidth="2" /><path d="M2 4l15-2v21L1 25z" fill="#3f6fc0" /><text x="9" y="19" textAnchor="middle" fontSize="15" fontWeight="700" fontFamily={UI} fill="#fff">W</text></T> },
  { open: 1, active: 1, icon: <T><path d="M0 0h30v30H0z" fill="#0a78d4" /><path d="M16 0h10v30H16z" fill="#d9940f" /><path d="M9 7h10v23H9z" fill="#eebd2d" /><path d="M3 15h10v15H3z" fill="#f9df66" /></T> },
  { open: 1, icon: <T><path d="M0 6q0-2 2-2h26q2 0 2 2v18q0 2-2 2H2q-2 0-2-2z" fill="#3a3a3a" /><path d="M0 8V6q0-2 2-2h26q2 0 2 2v2z" fill="#8a8a8a" /><path d="M5 12l5 4.500L5 21M13 21.500h8" stroke="#fff" strokeWidth="2.200" fill="none" /></T> },
  { open: 1, icon: <T><path d="M22 1l7 3v22l-7 3L8 17l-5 4-3-2 6-4-6-4 3-2 5 4zM22 9l-8 6 8 6z" fill="#1282cf" fillRule="evenodd" /><path d="M22 1l7 3v22l-7 3z" fill="#2a9fe6" /></T> },
  { open: 1, icon: <T><rect x="2" y="2" width="27" height="26" rx="3" fill="#27569e" /><path d="M2 24L14 11l14 15q-1 2-3 2H5q-3 0-3-4z" fill="#2ea6ea" /><path d="M10 28l9-9 9 8-2 1z" fill="#bfe3fa" /><circle cx="22" cy="7" r="2.500" fill="#fff" /></T> },
  { open: 1, icon: <T><path d="M2 3l24-2v4H6l-2 21-3 0z" fill="#7db86a" /><path d="M4 5l20 1 5-1-1 22-24-2z" fill="#eef7ea" stroke="#8fc07c" /><path d="M20 9h7M20 14h7M20 19h6M8 23h18" stroke="#6db058" strokeWidth="3" strokeDasharray="5 1" /><path d="M8 8l9 12M17 8L7 20" stroke="#1f6b22" strokeWidth="2.600" /></T> },
];

export default function App() {
  return (
    <Frame>
      <Global />
      <TitleBar>
        <QuickTools>
          <Svg s={18} stroke="#fff" strokeWidth="1.200"><path d="M.600.600h16.800v16.800H3.500L.600 14.500zM4 .600v7h10v-7M5.500 17v-5h7v5" /></Svg>
          <Svg s={18} stroke="#fff" strokeWidth="1.300"><path d="M.600 0v7.500h7.500M.800 7.200Q9-2 13.500 2.500q4.500 4 0 8.500L6.500 17.500" /></Svg>
          <Svg s={18} stroke="#8a8886" strokeWidth="1.300"><path d="M15.400 0v7.500H8M15.200 7.200Q7-2 2.500 2.500q-4.500 4 0 8.500l7 6.500" /></Svg>
        </QuickTools>
        <Fit w={325}>POWER BI - Capstone Project - Power BI Desktop</Fit>
        <WindowTools>
          <Fit w={45}>Sign in</Fit>
          <Tool $gap={12}><Svg s={26} stroke="#222" strokeWidth="1.500"><circle cx="13" cy="13" r="12.500" fill="#f3f2f1" stroke="none" /><circle cx="13" cy="7.500" r="3.700" /><path d="M6 14.500h14q0 7-7 7t-7-7z" /></Svg></Tool>
          <Tool $gap={40}><Svg s={14} stroke="#fff" strokeWidth="1.500"><path d="M0 9h13" /></Svg></Tool>
          <Tool $gap={41}><Svg s={14} stroke="#fff" strokeWidth="1.300"><path d="M.700 4h9.300v9.300H.700zM4 4V1h9.300v9.300H10" /></Svg></Tool>
          <Tool $gap={41}><Svg s={14} stroke="#fff" strokeWidth="1.400"><path d="M.700 1.500l12.600 12M13.300 1.500L.700 13.500" /></Svg></Tool>
        </WindowTools>
      </TitleBar>

      <RibbonArea>
        <Tabs>
          {TABS.map(([t, w, g]) => <Tab key={t} $w={w} $gap={g} $active={t === 'Home'}><Fit w={w}>{t}</Fit></Tab>)}
        </Tabs>
        <Groups>
          <Group $w={201}>
            <GroupBody $pad={12}>
              <RibbonButton $w={47} $off>{icons.paste}<ButtonLine><Fit w={35}>Paste</Fit></ButtonLine></RibbonButton>
              <SmallButtons>
                <SmallButton $first>{cut}<Fit w={23}>Cut</Fit></SmallButton>
                <SmallButton>{copy}<Fit w={34}>Copy</Fit></SmallButton>
                <SmallButton>{painter}<Fit w={98}>Format painter</Fit></SmallButton>
              </SmallButtons>
            </GroupBody>
            <GroupLabel><Fit w={54}>Clipboard</Fit></GroupLabel>
          </Group>
          {GROUPS.map((g) => (
            <Group key={g.label[0]} $w={g.w}>
              <GroupBody $pad={g.pad}>
                {g.items.map(([w, icon, ...lines]) => (
                  <RibbonButton key={icon} $w={w} $off={icon === 'sensitivity'}>
                    {icons[icon]}
                    {lines.map(([t, tw, caret], i) => (
                      <ButtonLine key={i}>
                        {t && <Fit w={tw}>{t}</Fit>}
                        {caret && <Caret color={icon === 'sensitivity' ? '#b3b1af' : INK} />}
                      </ButtonLine>
                    ))}
                  </RibbonButton>
                ))}
              </GroupBody>
              <GroupLabel><Fit w={g.label[1]}>{g.label[0]}</Fit></GroupLabel>
            </Group>
          ))}
        </Groups>
        <CollapseMark><Svg w={11} h={8} strokeWidth="2"><path d="M1 6.500L5.500 2 10 6.500" /></Svg></CollapseMark>
        <Tip>
          <Fit w={346.500}>Collapse or expand the filter pane while editing. This</Fit>
          <Fit w={274}>also determines how report readers see it</Fit>
        </Tip>
      </RibbonArea>

      <Main>
        <Left>
          <Work>
            <Rail>
              <RailItem $active $h={50} $pad={13}><Svg w={18} h={18} stroke="#252423" strokeWidth="1.700"><path d="M1 0v17h17M4.500 14V5h2.500v9zM9.500 14V8H12v6zM14.500 14V2H17v12z" /></Svg></RailItem>
              <RailItem $h={48} $pad={12}><Svg w={21} h={20} stroke="#797775"><path d="M1 1h19v18H1zM1 4h19M1 9h19M1 14h19M7.500 4v15M13.500 4v15" /></Svg></RailItem>
              <RailItem $h={53} $pad={11}><Svg w={24} h={23} stroke="#797775"><path d="M1 7.500h8.500v9H1zM1 10h8.500M14 1h9v8h-9zM14 3.500h9M14 13.500h9v9h-9zM14 16h9M6 7.500v-4h8M6 16.500v3h8" /></Svg></RailItem>
            </Rail>
            <Canvas>
              <Page>
                <Banner>
                  <Logo $w={308} $h={77} $left={5} $top={6}><Brand /></Logo>
                  <BannerTitle>
                    <FitScale w={600}>COVID-19 Research Data pipeline For</FitScale>
                    <FitScale w={530}>Knowledge Discovery Dashboard</FitScale>
                  </BannerTitle>
                  <Logo $w={291} $h={73} $left={0} $top={7}><Brand k={0.94} dx={1} dy={-1} /></Logo>
                </Banner>
                <Visual>
                  <VisualTitle><FitScale w={117}>OUTPUT</FitScale></VisualTitle>
                  <VisualRow>
                    <Grid>
                      <GridHead>
                        <NameCell $top={1.500}><Fit w={53}>Column4</Fit></NameCell>
                        <TextCell $top={1.500}><Fit w={53}>Column3</Fit></TextCell>
                      </GridHead>
                      <GridBody>
                        {ROWS.map((r, i) => (
                          <GridRow key={i} $h={r.h} $alt={r.alt}>
                            <NameCell $top={r.top}>{r.name && <Fit w={r.nw}>{r.name}</Fit>}</NameCell>
                            <TextCell $top={r.top} $end={r.end}>
                              {r.lines.map(([t, w], j) => <Fit key={j} w={w}>{t}</Fit>)}
                            </TextCell>
                          </GridRow>
                        ))}
                      </GridBody>
                    </Grid>
                    <VTrack><VThumb /></VTrack>
                  </VisualRow>
                  <VisualRow><HTrack><HThumb /></HTrack></VisualRow>
                </Visual>
              </Page>
              <CanvasThumb />
            </Canvas>
            <Filters>
              <Chevrons left />
              <FunnelSlot><Svg w={16} h={18}><path d="M15 1.500v15L9 11.500H2v-5h7z" /></Svg></FunnelSlot>
              <FilterLabel>Filters</FilterLabel>
            </Filters>
          </Work>
          <PageTabs>
            <ViewIcon $active $top={9}><Svg w={24} h={18} stroke="#252423"><path d="M1 1h22v12.500H1zM12 13.500v3M8 17h8" strokeWidth="1.600" /></Svg></ViewIcon>
            <PhoneIcon><Svg w={17} h={26}><rect x="1" y="1" width="15" height="24" rx="1.500" stroke="#484644" strokeWidth="1.600" /><path d="M7.500 21.500h2" /></Svg></PhoneIcon>
            <Steppers>
              <Svg w={6} h={12} stroke="none"><path d="M5.500 0v11L0 5.500z" fill="#c8c6c4" /></Svg>
              <Svg w={6} h={12} stroke="none"><path d="M.500 0v11L6 5.500z" fill="#c8c6c4" /></Svg>
            </Steppers>
            <PageTab><Fit w={44}>Page 1</Fit></PageTab>
            <AddPage><Svg s={14} stroke="#fff" strokeWidth="3"><path d="M7 0v14M0 7h14" /></Svg></AddPage>
          </PageTabs>
        </Left>

        <Pane $w={226}>
          <PaneHead><Fit w={124}>Visualizations</Fit><Chevrons /></PaneHead>
          <BuildLabel><Fit w={77}>Build visual</Fit></BuildLabel>
          <Modes>
            <Mode $on><Svg w={30} h={30} stroke="#252423"><path d="M0 .800h24" strokeWidth="1.500" /><path d="M.700 7h28.600v9H.700zM.700 20.500h28.600v9H.700z" fill={GREEN} strokeDasharray="2.500 1.500" /></Svg></Mode>
            <Mode><Svg w={30} h={30}><path d="M5 29H1V1h12l8 8v3M13 1v8h8" /><path d="M30 11L17 24l-3-2q8-9 16-11zM16 22q-5-2-5 3 0 3-3 4 9 1 9-5" fill="#f3f2f1" /></Svg></Mode>
          </Modes>
          <Svg w={225} h={15} stroke="#797775" strokeWidth="1"><path d="M0 15h20l10-10 10 10h185" /></Svg>
          <VizGrid>{vizIcons.map((v, i) => <span key={i}>{v}</span>)}</VizGrid>
          <FieldLabel $h={38}><Fit w={42}>Values</Fit></FieldLabel>
          <DropWell $h={34} $pad={12.500}><Fit w={133}>Add data fields here</Fit></DropWell>
          <FieldLabel $h={46} $strong><Fit w={87}>Drill through</Fit></FieldLabel>
          <FieldLabel $h={18}><Fit w={83}>Cross-report</Fit><Toggle><span>Off</span></Toggle></FieldLabel>
          <FieldLabel $h={49}><Fit w={92}>Keep all filters</Fit><Toggle $on><span>On</span></Toggle></FieldLabel>
          <DropWell $h={32} $pad={10}><Fit w={188}>Add drill-through fields here</Fit></DropWell>
        </Pane>

        <Pane $w={226}>
          <PaneHead><Fit w={41}>Data</Fit><Chevrons /></PaneHead>
          <SearchBox><Svg s={18} strokeWidth="1.400"><circle cx="11.500" cy="6.500" r="6" /><path d="M7 11l-6.500 6.500" /></Svg><Fit w={50.500}>Search</Fit></SearchBox>
          {TABLES.map(([name, w, n]) => (
            <React.Fragment key={name}>
              <TableRow>
                <Svg w={14} h={8} strokeWidth="1" stroke="#605e5c"><path d="M0 .500L7 7.500 14 .500" /></Svg>
                <TableGlyph />
                <TableName><Fit w={w}>{name}</Fit></TableName>
              </TableRow>
              {Array.from({ length: n }, (_, i) => (
                <FieldRow key={i}><Check /><Fit w={59}>{'Column' + (i + 1)}</Fit></FieldRow>
              ))}
            </React.Fragment>
          ))}
        </Pane>
      </Main>

      <Status>
        <Fit w={73}>Page 1 of 1</Fit>
        <Zoom>
          <Svg w={153} h={16} stroke="#605e5c"><path d="M0 9h6" strokeWidth="2" /><path d="M11 8.500h125" strokeWidth="1" /><path d="M60.500 2v13" strokeWidth="5" /><path d="M74 5v7" strokeWidth="2" /><path d="M143 8.500h10M148 3.500v10" strokeWidth="1.800" /></Svg>
          <Percent><Fit w={28}>80%</Fit></Percent>
          <Svg w={21} h={16} stroke="#605e5c"><path d="M1 1h19v14H1z" strokeWidth="1.800" /><path d="M7 4H4v2.500M14 4h3v2.500M7 12H4V9.500M14 12h3V9.500" strokeWidth="1.300" /></Svg>
        </Zoom>
      </Status>

      <Taskbar>
        <svg width="0" height="0">
          <defs>
            <linearGradient id="moon" x2="0" y2="1"><stop stopColor="#f7c948" /><stop offset="1" stopColor="#ef7d1a" /></linearGradient>
            <linearGradient id="win" x2="1" y2="1"><stop stopColor="#4cc9fb" /><stop offset="1" stopColor="#0072d0" /></linearGradient>
            <linearGradient id="chat" x2="0" y2="1"><stop stopColor="#8d76c8" /><stop offset="1" stopColor="#5a55c9" /></linearGradient>
            <linearGradient id="edge" x2="1" y2="0"><stop stopColor="#1ea7e0" /><stop offset="1" stopColor="#5fe06a" /></linearGradient>
            <linearGradient id="folder" x2="0" y2="1"><stop stopColor="#ffdc6b" /><stop offset="1" stopColor="#fbbd22" /></linearGradient>
            <linearGradient id="store" x2="1" y2="1"><stop stopColor="#1067b5" /><stop offset="1" stopColor="#253a6b" /></linearGradient>
          </defs>
        </svg>
        <Weather>
          <Svg s={29} stroke="none"><path d="M18 0q10 4 9.500 14T15 28Q4 28 0 17q9 3 14-3 5-6 4-14z" fill="url(#moon)" /></Svg>
          <Stack><Fit w={32}>28°C</Fit><Faint><Fit w={35}>Clear</Fit></Faint></Stack>
        </Weather>
        <Svg s={29} stroke="none"><path d="M0 0h14v14H0zM15 0h14v14H15zM0 15h14v14H0zM15 15h14v14H15z" fill="url(#win)" /></Svg>
        <SearchPill>
          <Svg w={18} h={19} stroke="#333" strokeWidth="2.200"><circle cx="8" cy="8" r="6.800" /><path d="M13 13l5 5.500" /></Svg>
          <Fit w={51}>Search</Fit>
          <BingSlot><Svg s={25} stroke="#1b74e0" strokeWidth="2.200"><path d="M12.500 1a11.500 11.500 0 11-4 22H1.500V12Q1.500 1 12.500 1z" /><path d="M9 6l2 1v10l6-3-4-2" stroke="#1ba0e8" /></Svg></BingSlot>
        </SearchPill>
        <Apps>
          {apps.map((a, i) => <AppSlot key={i} $open={a.open} $active={a.active}>{a.icon}</AppSlot>)}
        </Apps>
        <Tray>
          <TrayItem $w={24}><Svg w={14} h={8}><path d="M1 7l6-6 6 6" stroke="#1b1b1b" /></Svg></TrayItem>
          <TrayItem $w={54}><Svg w={20} h={16} stroke="#1b1b1b"><path d="M5 14.500h10q4 0 4-4T15 7q0-5-5-5-4 0-5 4-4 1-4 4.500t4 4M1 1l17 14" /></Svg></TrayItem>
          <TrayItem $w={26}><Svg w={20} h={20} stroke="#1b1b1b"><path d="M2 8Q4 2 10 2q5 0 7.500 4M18 1v5.500h-5.500M18 11q-1 5-5 7M9 18Q5 18 3 14" /><path d="M4 12v5h5" /><circle cx="15" cy="15" r="4.500" fill="#f08a1c" stroke="none" /></Svg></TrayItem>
          <TrayItem $w={74}><Stack $align="center"><Fit w={29}>ENG</Fit><Fit w={15}>IN</Fit></Stack></TrayItem>
          <TrayItem $w={18}><Svg w={20} h={16} stroke="#1b1b1b"><path d="M1 6Q10-2 19 6M4 9q6-5 12 0M7 12q3-2.500 6 0" strokeWidth="1.700" /><circle cx="10" cy="14" r="1.500" fill="#1b1b1b" stroke="none" /></Svg></TrayItem>
          <TrayItem $w={42}><Svg w={20} h={16} stroke="#1b1b1b"><path d="M1 5.500h4l5-4.500v14l-5-4.500H1zM13.500 5.500l5.500 5.500M19 5.500L13.500 11" /></Svg></TrayItem>
          <TrayItem $w={20}><Svg w={20} h={16} stroke="#1b1b1b"><rect x="3" y="4" width="14" height="9" rx="2" fill="#1b1b1b" /><path d="M19 7v3M2 1l3 6M0 5h7" strokeWidth="2" /></Svg></TrayItem>
          <TrayItem $w={99} $justify="flex-end"><Stack $align="flex-end"><Fit w={37}>00:59</Fit><Fit w={79}>25-09-2023</Fit></Stack></TrayItem>
          <TrayItem $w={38}><Svg w={18} h={19} stroke="#1b1b1b"><path d="M2 14q2-2 2-6 0-6 5-6t5 6q0 4 2 6zM7 17h4" fill="#1b1b1b" /><path d="M11 0h6l-5 7h6" strokeWidth="1.500" /></Svg></TrayItem>
        </Tray>
      </Taskbar>
    </Frame>
  );
}
